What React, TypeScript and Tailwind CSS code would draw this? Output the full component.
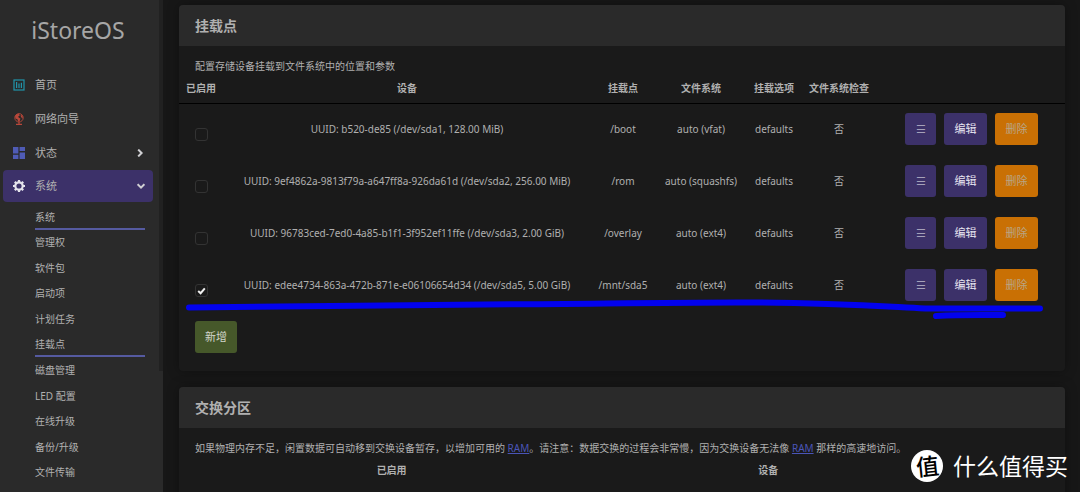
import { useState } from "react";

interface Mount {
  device: string;
  point: string;
  fs: string;
  enabled: boolean;
}

const mounts: Mount[] = [
  { device: "UUID: b520-de85 (/dev/sda1, 128.00 MiB)", point: "/boot", fs: "auto (vfat)", enabled: false },
  { device: "UUID: 9ef4862a-9813f79a-a647ff8a-926da61d (/dev/sda2, 256.00 MiB)", point: "/rom", fs: "auto (squashfs)", enabled: false },
  { device: "UUID: 96783ced-7ed0-4a85-b1f1-3f952ef11ffe (/dev/sda3, 2.00 GiB)", point: "/overlay", fs: "auto (ext4)", enabled: false },
  { device: "UUID: edee4734-863a-472b-871e-e06106654d34 (/dev/sda5, 5.00 GiB)", point: "/mnt/sda5", fs: "auto (ext4)", enabled: true },
];

const systemLinks = [
  { label: "系统", active: true },
  { label: "管理权" },
  { label: "软件包" },
  { label: "启动项" },
  { label: "计划任务" },
  { label: "挂载点", active: true },
  { label: "磁盘管理" },
  { label: "LED 配置" },
  { label: "在线升级" },
  { label: "备份/升级" },
  { label: "文件传输" },
];

function HomeIcon() {
  return (
    <svg viewBox="0 0 12 12" className="size-3 text-[#2195ab]" fill="none" stroke="currentColor">
      <rect x="1" y="1" width="10" height="10" strokeWidth="1.2" />
      <path d="M3.6 3v6M6 4.6V9M8.4 3.8V9" strokeWidth="1.2" />
    </svg>
  );
}

function GlobeIcon() {
  return (
    <svg viewBox="0 0 12 12" className="size-3 text-[#b8473a]" fill="none" stroke="currentColor">
      <circle cx="6" cy="4.8" r="4.2" strokeWidth="0.9" />
      <path d="M2 3.4 3.6 1.2 6 .8 6.8 2.4 5.2 3.4 5.6 4.6 7.4 5.4 6.6 8.4 5 8.6 4.6 6.4 2.6 5.4zM8 1.6 9.8 3.8 9.6 5.6 8.4 4.6 7.6 3z" fill="currentColor" stroke="none" />
      <path d="M6 9v2M3 11.3h6" strokeWidth="1.2" />
    </svg>
  );
}

function StatusIcon() {
  return (
    <svg viewBox="0 0 12 12" className="size-3 text-[#4f5bb5]" fill="currentColor">
      <path d="M0 0h5.4v6.4H0zM6.6 0H12v4H6.6zM0 7.8h5.4V12H0zM6.6 5.4H12V12H6.6z" />
    </svg>
  );
}

function GearIcon() {
  return (
    <svg viewBox="0 0 12 12" className="size-3 text-[#e4e3ec]" fill="none" stroke="currentColor">
      <circle cx="6" cy="6" r="3.7" strokeWidth="2.2" />
      <path d="M6 0v2M6 10v2M0 6h2M10 6h2M1.8 1.8l1.4 1.4M8.8 8.8l1.4 1.4M10.2 1.8 8.8 3.2M3.2 8.8l-1.4 1.4" strokeWidth="2.2" />
    </svg>
  );
}

function Chevron({ open }: { open?: boolean }) {
  return (
    <svg viewBox="0 0 8 8" className="ml-auto size-2 text-[#d0d0d4]" fill="none" stroke="currentColor" strokeWidth="2">
      <path d={open ? "M0.6 2.2 4 5.6 7.4 2.2" : "M2.2 0.6 5.6 4 2.2 7.4"} />
    </svg>
  );
}

function Sidebar() {
  return (
    <aside className="flex w-[163px] shrink-0 overflow-hidden bg-[#2a2a2a]">
      <div className="flex-1 pr-[6px] pl-[3px]">
        <a href="#" className="block pt-[14px] text-center text-[23px] leading-8 text-[#a6a6a6]">
          iStoreOS
        </a>
        <nav className="mt-[22px] text-[11px] text-[#b0b0b0]">
          <a href="#" className="flex h-[34px] items-center gap-[10px] px-[10px]">
            <HomeIcon />
            首页
          </a>
          <a href="#" className="flex h-[34px] items-center gap-[10px] px-[10px]">
            <GlobeIcon />
            网络向导
          </a>
          <a href="#" className="flex h-[34px] items-center gap-[10px] pr-[9px] pl-[10px]">
            <StatusIcon />
            状态
            <Chevron />
          </a>
          <a href="#" className="flex h-8 items-center gap-[10px] rounded bg-[#3c3169] pr-2 pl-[10px]">
            <GearIcon />
            系统
            <Chevron open />
          </a>
          <ul className="mt-[2px] mr-[8px] ml-8 grid h-[281px] auto-rows-fr text-[10px]">
            {systemLinks.map((l) => (
              <li key={l.label} className="flex">
                <a
                  href="#"
                  className={
                    l.active
                      ? "flex flex-1 items-center border-b-2 border-[#555aa0] pt-[2px]"
                      : "flex flex-1 items-center"
                  }
                >
                  {l.label}
                </a>
              </li>
            ))}
          </ul>
        </nav>
      </div>
      <div className="w-1">
        <div className="h-[371px] bg-[#212121]" />
      </div>
    </aside>
  );
}

function MountRow({ mount }: { mount: Mount }) {
  const [enabled, setEnabled] = useState(mount.enabled);

  return (
    <tr className="h-[52px]">
      <td>
        <label className="flex justify-center pt-[10px]">
          <span className="grid size-[13px]">
            <input
              type="checkbox"
              aria-label={mount.device}
              checked={enabled}
              onChange={(e) => setEnabled(e.target.checked)}
              className="col-start-1 row-start-1 size-[13px] appearance-none rounded-[3px] border border-[#333333]"
            />
            {enabled && (
              <svg viewBox="0 0 13 13" className="pointer-events-none col-start-1 row-start-1 size-[13px]" fill="none" stroke="#f0f0f0" strokeWidth="2">
                <path d="M3.2 7 5.6 9.2 9.8 4.4" />
              </svg>
            )}
          </span>
        </label>
      </td>
      <td>{mount.device}</td>
      <td>{mount.point}</td>
      <td>{mount.fs}</td>
      <td>defaults</td>
      <td>否</td>
      <td>
        <div className="flex justify-end gap-2 pr-[27px] text-[11px]">
          <button className="h-8 w-[31px] rounded-[3px] bg-[#3c3169] text-[#a5a1ba]">☰</button>
          <button className="h-8 w-[43px] rounded-[3px] bg-[#3c3169] text-[#e6e4f0]">编辑</button>
          <button className="h-8 w-[43px] rounded-[3px] bg-[#c97004] text-[#b8a684]">删除</button>
        </div>
      </td>
    </tr>
  );
}

function RamLink() {
  return (
    <a href="#" className="text-[#4a55b8] underline">
      RAM
    </a>
  );
}

export default function App() {
  return (
    <div className="relative flex h-screen overflow-hidden bg-[#171717] font-['Noto_Sans','Noto_Sans_CJK_SC',sans-serif] text-[10px] leading-4 text-[#b0b0b0]">
      <Sidebar />
      <main className="min-w-0 flex-1 pt-[5px] pr-[15px] pl-4">
        <section className="relative rounded bg-[#1a1a1a] pb-[18px] shadow-[0_0_12px_rgba(0,0,0,0.35)]">
          <h3 className="flex h-[41px] items-center rounded-t bg-[#2a2a2a] px-4 text-[14px] font-bold">挂载点</h3>
          <p className="px-4 pt-3">配置存储设备挂载到文件系统中的位置和参数</p>
          <table className="w-full table-fixed text-center">
            <colgroup>
              <col className="w-[44px]" />
              <col />
              <col className="w-[64px]" />
              <col className="w-[92px]" />
              <col className="w-[54px]" />
              <col className="w-[76px]" />
              <col className="w-[188px]" />
            </colgroup>
            <thead>
              <tr className="h-[29px] border-b border-black">
                <th>已启用</th>
                <th>设备</th>
                <th>挂载点</th>
                <th>文件系统</th>
                <th>挂载选项</th>
                <th>文件系统检查</th>
                <th />
              </tr>
            </thead>
            <tbody>
              {mounts.map((m) => (
                <MountRow key={m.point} mount={m} />
              ))}
            </tbody>
          </table>
          <button className="mt-[10px] ml-4 h-8 w-[42px] rounded-[3px] bg-[#46582a] text-[11px] text-[#d2d6ca]">新增</button>

          {/* Marker strokes under the last mount */}
          <svg
            viewBox="0 0 860 24"
            className="pointer-events-none absolute top-[293px] left-[6px] h-6 w-[860px]"
            fill="none"
            stroke="#0202ee"
            strokeWidth="6"
            strokeLinecap="round"
            strokeLinejoin="round"
          >
            <path d="M4 9.500C100 9 200 7 300 6.500S500 4 570 4.500C650 5 690 8 740 10.500H855" />
            <path d="M751 18C775 16.500 800 17 818 17" />
          </svg>
        </section>

        <section className="mt-4 h-40 rounded bg-[#1a1a1a] shadow-[0_0_12px_rgba(0,0,0,0.35)]">
          <h3 className="flex h-[41px] items-center rounded-t bg-[#2a2a2a] px-4 text-[14px] font-bold">交换分区</h3>
          <p className="px-4 pt-3">
            如果物理内存不足，闲置数据可自动移到交换设备暂存，以增加可用的 <RamLink />。请注意：数据交换的过程会非常慢，因为交换设备无法像 <RamLink /> 那样的高速地访问。
          </p>
          <table className="w-full table-fixed text-center">
            <colgroup>
              <col className="w-[48%]" />
              <col className="w-[37%]" />
              <col />
            </colgroup>
            <thead>
              <tr className="h-7">
                <th>已启用</th>
                <th>设备</th>
                <th />
              </tr>
            </thead>
          </table>
        </section>
      </main>

      {/* Watermark */}
      <div className="pointer-events-none absolute right-[12px] bottom-[10px] flex items-center gap-[10px] text-[23px] leading-8 text-white">
        <span className="flex size-8 items-center justify-center rounded-full bg-white font-medium text-black">
          <span className="-rotate-6">值</span>
        </span>
        什么值得买
      </div>
    </div>
  );
}
